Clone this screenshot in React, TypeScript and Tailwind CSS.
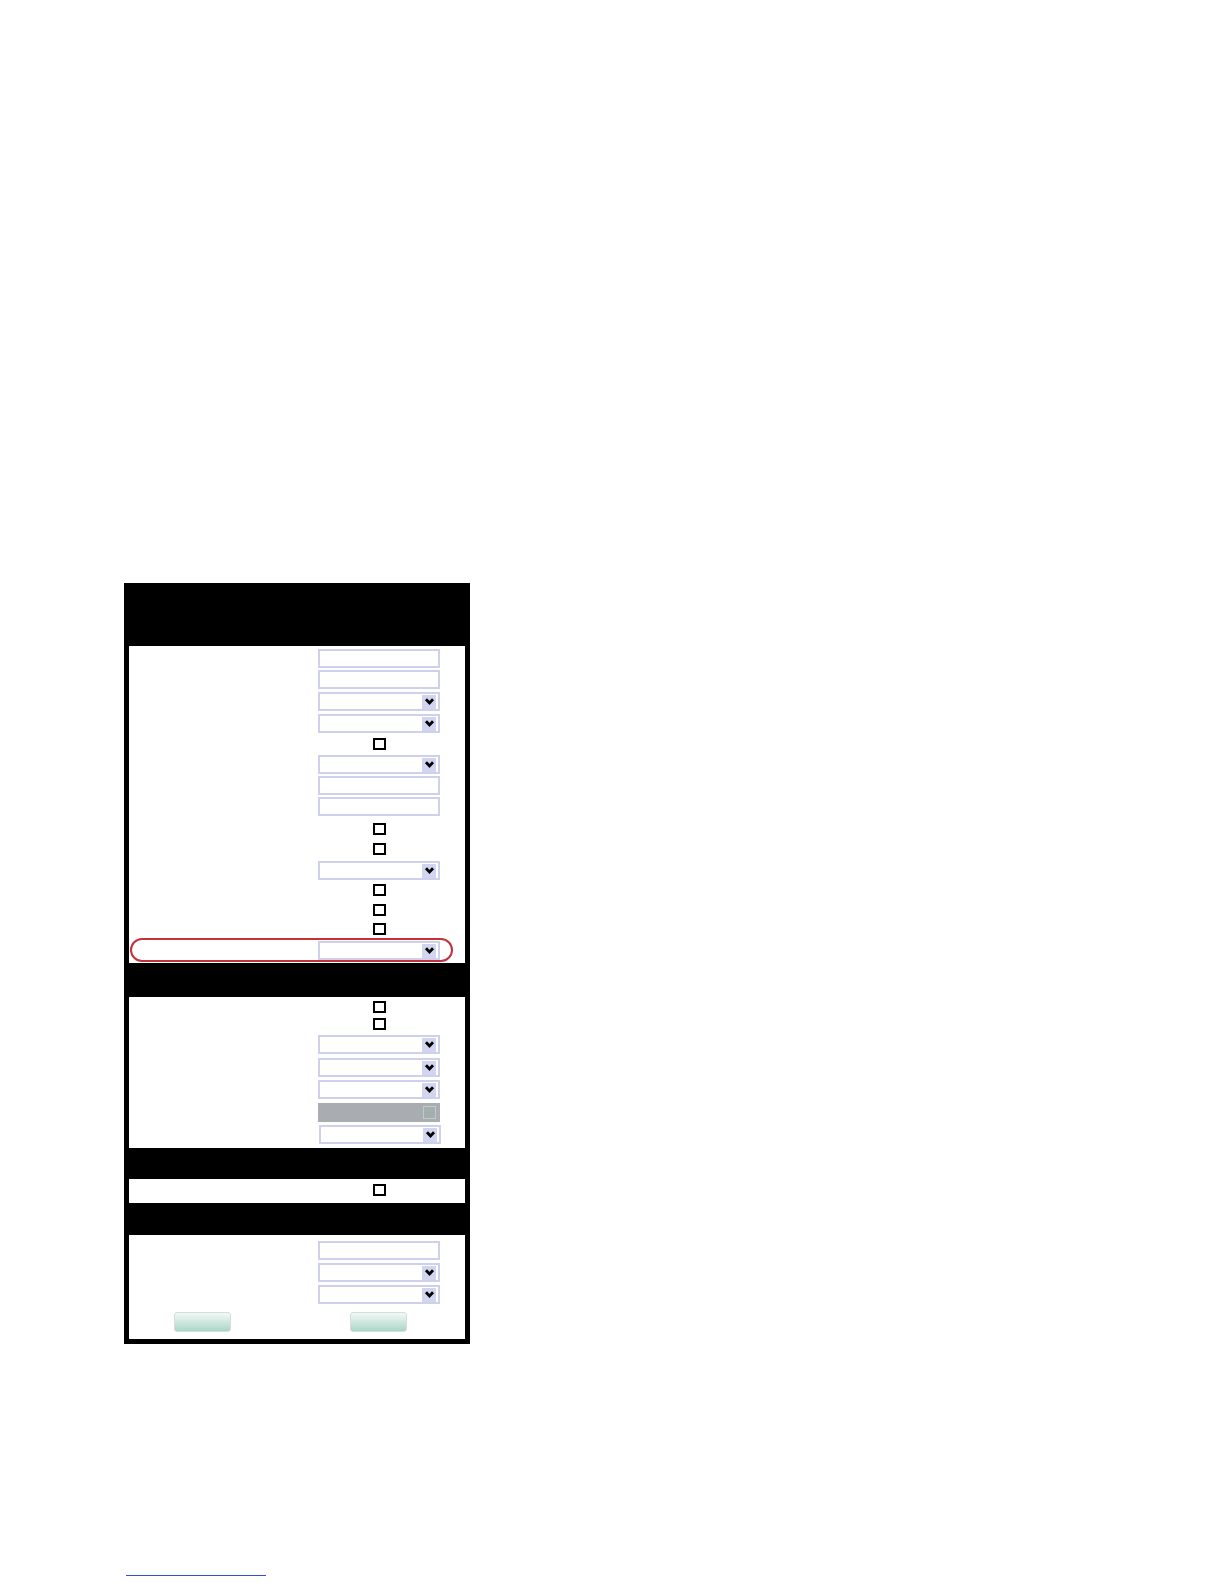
import React from 'react';

const Input = ({ className = '' }: { className?: string }) => (
  <div className={`ml-[189px] h-[19px] w-[122px] border-2 border-[#cfd1ec] bg-white ${className}`} />
);

const Chevron = () => (
  <svg viewBox="0 0 10 10" className="h-[11px] w-[11px]">
    <path d="M1.8 3 L5 6.3 L8.2 3" stroke="#000" strokeWidth="2.6" fill="none" />
  </svg>
);

const Select = ({ className = 'ml-[189px]' }: { className?: string }) => (
  <div className={`flex h-[19px] w-[122px] items-center justify-end border-2 border-[#cfd1ec] bg-white pr-[2px] ${className}`}>
    <div className="flex h-[14px] w-[14px] items-center justify-center bg-[#d2d5f0]">
      <Chevron />
    </div>
  </div>
);

const Check = ({ className = '' }: { className?: string }) => (
  <div className={`ml-[244px] h-[12px] w-[13px] border-2 border-black bg-white ${className}`} />
);

const Disabled = ({ className = '' }: { className?: string }) => (
  <div className={`ml-[189px] flex h-[19px] w-[122px] items-center justify-end bg-[#a9acb1] pr-[4px] ${className}`}>
    <div className="h-[13px] w-[13px] border border-[#c4c9cc] bg-[#a3afad]" />
  </div>
);

const Button = () => (
  <div className="h-[20px] w-[57px] rounded-[3px] border border-[#d6dedb] bg-gradient-to-b from-[#f4f8f6] to-[#a9d6c9]" />
);

export default function App() {
  return (
    <div className="min-h-[1584px] bg-white pl-[124px] pt-[583px]">
      <div className="w-[346px] bg-black px-[5px] pb-[5px]">
        {/* header */}
        <div className="h-[63px]" />

        {/* section 1 */}
        <div className="flex flex-col bg-white pb-[1px]">
          <Input className="mt-[3px]" />
          <Input className="mt-[2px]" />
          <Select className="ml-[189px] mt-[3px]" />
          <Select className="ml-[189px] mt-[3px]" />
          <Check className="mt-[5px]" />
          <Select className="ml-[189px] mt-[5px]" />
          <Input className="mt-[2px]" />
          <Input className="mt-[2px]" />
          <Check className="mt-[7px]" />
          <Check className="mt-[8px]" />
          <Select className="ml-[189px] mt-[6px]" />
          <Check className="mt-[4px]" />
          <Check className="mt-[8px]" />
          <Check className="mt-[7px]" />
          <div className="ml-[1px] mt-[3px] h-[24px] w-[323px] rounded-full border-2 border-[#c3313b] pt-px">
            <Select className="ml-[186px]" />
          </div>
        </div>

        <div className="h-[34px]" />

        {/* section 2 */}
        <div className="flex flex-col bg-white pb-[4px]">
          <Check className="mt-[4px]" />
          <Check className="mt-[5px]" />
          <Select className="ml-[189px] mt-[5px]" />
          <Select className="ml-[189px] mt-[4px]" />
          <Select className="ml-[189px] mt-[3px]" />
          <Disabled className="mt-[4px]" />
          <Select className="ml-[190px] mt-[3px]" />
        </div>

        <div className="h-[31px]" />

        {/* section 3 */}
        <div className="flex h-[24px] flex-col bg-white">
          <Check className="mt-[5px]" />
        </div>

        <div className="h-[32px]" />

        {/* section 4 */}
        <div className="flex flex-col bg-white pb-[7px]">
          <Input className="mt-[6px]" />
          <Select className="ml-[189px] mt-[3px]" />
          <Select className="ml-[189px] mt-[3px]" />
          <div className="ml-[45px] mt-[8px] flex gap-[119px]">
            <Button />
            <Button />
          </div>
        </div>
      </div>

      <div className="ml-[2px] mt-[231px] h-px w-[140px] bg-[#2f4fd6]" />
    </div>
  );
}
